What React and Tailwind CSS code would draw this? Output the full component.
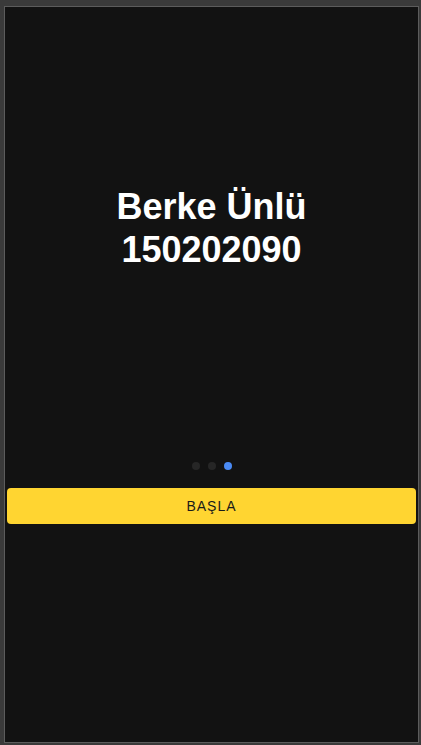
export default function App() {
  const slides = 3;
  const active = 2;

  return (
    <div className="w-[421px] h-[745px] bg-[#3a3a3a] pt-[6px] pl-[4px] pr-[2px] pb-[2px] font-['Liberation_Sans',Arial,sans-serif]">
      <div className="h-full border border-[#5c5c5c] bg-[#121212] flex flex-col">
        {/* slide */}
        <div className="h-[442px] flex items-center justify-center">
          <h1 className="text-[36px] font-bold text-white text-center leading-[43px]">
            Berke Ünlü
            <br />
            150202090
          </h1>
        </div>

        {/* pager dots */}
        <div className="flex justify-center gap-2 mt-[13px]">
          {Array.from({ length: slides }).map((_, i) => (
            <span
              key={i}
              className={
                i === active
                  ? "w-2 h-2 rounded-full bg-[#4a8af4]"
                  : "w-2 h-2 rounded-full bg-[#262626]"
              }
            />
          ))}
        </div>

        <div className="px-[2px] mt-[18px]">
          <button className="w-full h-9 rounded-[4px] bg-[#ffd531] text-[14px] tracking-[0.07em] text-[#1a1a1a]">
            BAŞLA
          </button>
        </div>
      </div>
    </div>
  );
}
